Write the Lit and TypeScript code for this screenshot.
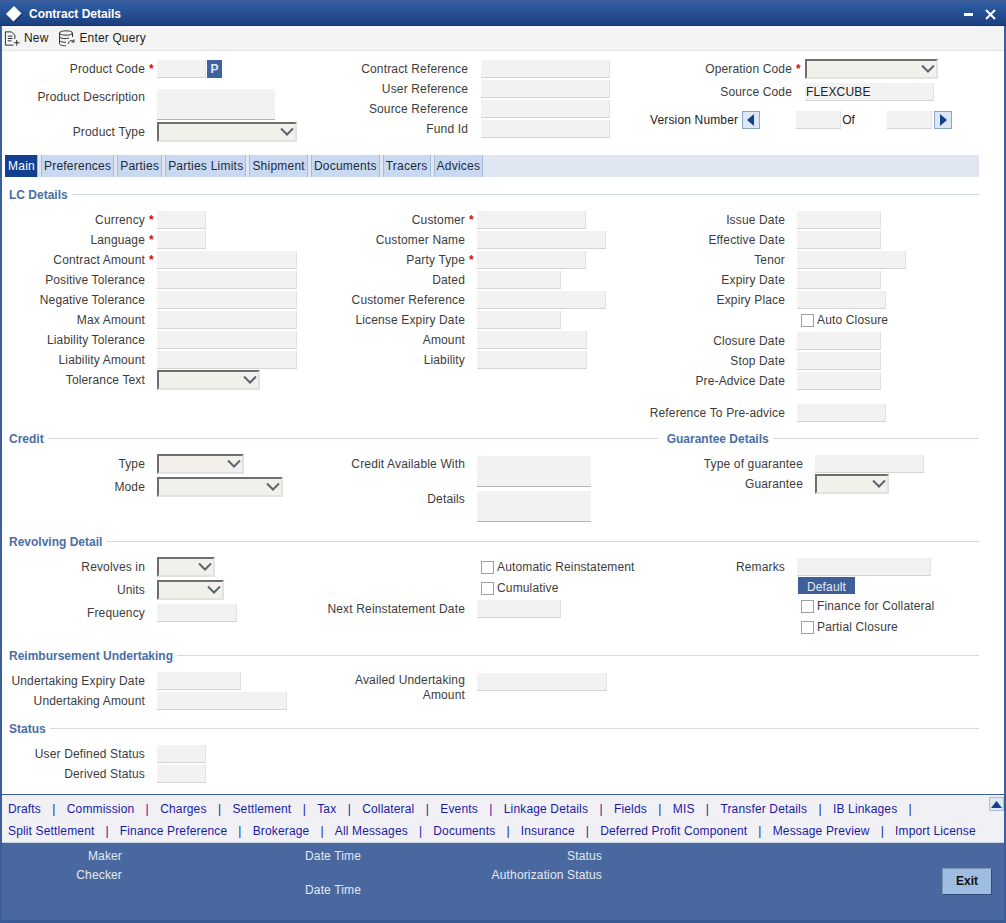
import { LitElement, html, css, svg, nothing } from "lit";
import { customElement } from "lit/decorators.js";

type Kind = "input" | "select" | "area" | "check" | "custom";

interface Row {
	label?: string;
	star?: boolean;
	kind?: Kind;
	w?: number;
	top?: number; // gap above the row
	two?: boolean;
}

const chevron = svg`<svg width="16" height="10" viewBox="0 0 16 10"><path d="M2 1.5 8 7.5 14 1.5" fill="none" stroke="#5b6470" stroke-width="2"/></svg>`;

const LC_1: Row[] = [
	{ label: "Currency", star: true, w: 49 },
	{ label: "Language", star: true, w: 49 },
	{ label: "Contract Amount", star: true, w: 140 },
	{ label: "Positive Tolerance", w: 140 },
	{ label: "Negative Tolerance", w: 140 },
	{ label: "Max Amount", w: 140 },
	{ label: "Liability Tolerance", w: 140 },
	{ label: "Liability Amount", w: 140 },
	{ label: "Tolerance Text", kind: "select", w: 103 },
];

const LC_2: Row[] = [
	{ label: "Customer", star: true, w: 109 },
	{ label: "Customer Name", w: 129 },
	{ label: "Party Type", star: true, w: 109 },
	{ label: "Dated", w: 84 },
	{ label: "Customer Reference", w: 129 },
	{ label: "License Expiry Date", w: 84 },
	{ label: "Amount", w: 110 },
	{ label: "Liability", w: 110 },
];

const LC_3: Row[] = [
	{ label: "Issue Date", w: 84 },
	{ label: "Effective Date", w: 84 },
	{ label: "Tenor", w: 109 },
	{ label: "Expiry Date", w: 84 },
	{ label: "Expiry Place", w: 89 },
	{ label: "Auto Closure", kind: "check" },
	{ label: "Closure Date", w: 84, top: 1 },
	{ label: "Stop Date", w: 84 },
	{ label: "Pre-Advice Date", w: 84 },
	{ label: "Reference To Pre-advice", w: 89, top: 12 },
];

const LINKS_1 = ["Drafts", "Commission", "Charges", "Settlement", "Tax", "Collateral", "Events", "Linkage Details", "Fields", "MIS", "Transfer Details", "IB Linkages"];
const LINKS_2 = ["Split Settlement", "Finance Preference", "Brokerage", "All Messages", "Documents", "Insurance", "Deferred Profit Component", "Message Preview", "Import License"];
const TABS = ["Main", "Preferences", "Parties", "Parties Limits", "Shipment", "Documents", "Tracers", "Advices"];

@customElement("app-root")
export class AppRoot extends LitElement {
	static override styles = css`
		:host {
			display: block;
			width: 1006px;
			height: 923px;
			font: 12px/16px "Liberation Sans", Arial, sans-serif;
			letter-spacing: 0.15px;
			color: #3c3c3c;
		}

		* { box-sizing: border-box; }

		.window {
			display: flex;
			flex-direction: column;
			height: 923px;
			background: #fff;
			border: solid #3d5e9c;
			border-width: 3px 2px;
			border-bottom-color: #3a5a96;
		}

		.title {
			display: flex;
			align-items: center;
			height: 23px;
			margin: 0 -2px;
			padding: 0 10px 0 5px;
			background: linear-gradient(#2f5da3, #1c3f80);
			border-bottom: 1px solid #163468;
			color: #fff;
			font-weight: bold;
			letter-spacing: 0;
		}
		.title span { margin-left: 6px; flex: 1; }
		.title .min { margin-right: 12px; }

		.toolbar {
			display: flex;
			align-items: center;
			height: 25px;
			padding-left: 2px;
			background: #f4f4f4;
			border-bottom: 1px solid #e6e6e6;
			color: #222;
		}
		.toolbar span { margin: 0 10px 0 3px; }

		.head {
			display: grid;
			grid-template-columns: 320px 320px 1fr;
			height: 104px;
			padding-top: 8px;
		}

		.col { display: flex; flex-direction: column; }
		.head .b { --lw: 146px; --sw: 13px; }
		.head .c { --lw: 150px; --sw: 13px; }

		.row {
			--row-h: 20px;
			display: flex;
			align-items: center;
			min-height: var(--row-h);
		}
		.row.top { align-items: flex-start; }
		.label {
			flex: none;
			width: var(--lw, 143px);
			text-align: right;
		}
		.label.two { line-height: 15px; }
		.slot {
			flex: none;
			width: var(--sw, 12px);
			padding-left: 4px;
			color: #d01010;
			font-weight: bold;
		}

		.input {
			height: 18px;
			padding: 0 1px;
			background: #f2f2f2;
			border: 0;
			border-bottom: 1px solid #d4d4d4;
			border-right: 1px solid #e2e2e2;
			font: inherit;
			letter-spacing: inherit;
			color: #222;
			outline: none;
		}

		.area {
			height: 31px;
			background: #f2f2f2;
			border-bottom: 1px solid #b4b4b4;
		}

		.select {
			display: flex;
			align-items: center;
			justify-content: flex-end;
			height: 20px;
			background: #f1f0ea;
			border: 2px solid #e2e2de;
			border-top-color: #6e6e6e;
			border-left-color: #6e6e6e;
		}

		.check {
			display: flex;
			align-items: center;
			gap: 3px;
			margin-left: 4px;
			color: #3c3c3c;
		}
		.check i {
			width: 13px;
			height: 13px;
			background: #fff;
			border: 1px solid #a0a0a0;
		}

		.lookup {
			width: 15px;
			height: 18px;
			margin-left: 1px;
			background: #3f639f;
			color: #dfe7f3;
			font-weight: bold;
			text-align: center;
			line-height: 18px;
		}

		.version {
			display: flex;
			align-items: center;
			height: 20px;
			margin-top: 8px;
			padding-left: 8px;
			color: #222;
		}
		.version .input { width: 45px; }
		.version .spin {
			display: flex;
			align-items: center;
			justify-content: center;
			width: 18px;
			height: 18px;
			background: #dce8f6;
			border: 1px solid #8aa5c8;
		}
		.version .of { margin: 0 31px 0 1px; }
		.version .m1 { margin-left: 4px; }
		.version .m2 { margin-left: 36px; }
		.version .m3 { margin-left: 1px; }
		.version .m4 { margin-left: 2px; }

		.tabs {
			display: flex;
			gap: 3px;
			height: 22px;
			margin: 0 25px 0 3px;
			background: #e0e7f3;
		}
		.tab {
			padding: 3px 2px 0;
			background: #c9d9f2;
			border: 1px solid #a6bbd8;
			border-width: 0 1px;
			color: #1e2a3a;
			letter-spacing: 0.23px;
			white-space: nowrap;
		}
		.tab.active {
			background: #123f8f;
			border-left-color: #6a2a50;
			color: #fff;
		}

		.lc { height: 244px; margin-top: 10px; }
		.credit { height: 103px; }
		.revolving { height: 114px; }
		.reimb { height: 73px; }
		.status { height: 73px; }

		.legend {
			display: flex;
			align-items: center;
			height: 16px;
			margin: 0 25px 7px 7px;
			color: #4a6ea5;
			font-weight: bold;
			letter-spacing: 0;
		}
		.legend hr {
			flex: 1;
			height: 1px;
			margin: 0 0 2px 4px;
			background: #cfdae6;
			border: 0;
		}
		.legend hr.split {
			flex: none;
			width: 610px;
			margin-right: 9px;
		}

		.cols {
			display: grid;
			grid-template-columns: 320px 320px 1fr;
		}
		.guarantee { --lw: 161px; }

		.row.default-row {
			align-items: flex-start;
			min-height: 19px;
		}
		.default {
			width: 57px;
			height: 17px;
			margin-left: 1px;
			background: #3f5f9b;
			color: #e6ebf4;
			text-align: center;
			line-height: 20px;
			overflow: hidden;
		}

		.links {
			display: flex;
			height: 49px;
			padding: 3px 0 0 6px;
			background: #f1f1f5;
			border-top: 1px solid #3d5e9c;
			border-bottom: 1px solid #c8d4e4;
			color: #1a1aa6;
		}
		.links > div { flex: 1; }
		.line {
			display: flex;
			gap: 11.3px;
			height: 22px;
			align-items: center;
			white-space: nowrap;
		}
		.line.tight { gap: 11.05px; }
		.links .up {
			flex: none;
			align-self: flex-start;
			display: flex;
			align-items: center;
			justify-content: center;
			width: 15px;
			height: 14px;
			margin-top: -1px;
			background: #dce8f6;
			border: 1px solid #a8bdd8;
		}

		.footer {
			display: flex;
			flex: 1;
			padding-top: 4px;
			background: #4a68a0;
			color: #e4e9f2;
			line-height: 19px;
		}
		.footer .names { width: 120px; text-align: right; }
		.footer .times { width: 157px; margin-left: 183px; }
		.footer .times div + div { margin-top: 15px; }
		.footer .states { width: 140px; text-align: right; }
		.exit {
			width: 50px;
			height: 27px;
			margin: 21px 12px 0 auto;
			background: #9fbde3;
			border: 1px solid #7f96b8;
			border-right-color: #2f4a78;
			border-bottom-color: #2f4a78;
			color: #111;
			font-weight: bold;
			letter-spacing: 0;
			text-align: center;
			line-height: 25px;
		}
	`;

	private control(r: Row) {
		if (r.kind === "select") {
			return html`<div class="select" style="width:${r.w}px">${chevron}</div>`;
		}
		if (r.kind === "area") {
			return html`<div class="area" style="width:${r.w}px"></div>`;
		}
		return html`<input class="input" readonly style="width:${r.w}px" />`;
	}

	private row(r: Row) {
		const gap = r.top ? `margin-top:${r.top}px` : nothing;
		if (r.kind === "check") {
			return html`
				<div class="row" style="${gap}">
					<div class="label"></div>
					<div class="slot"></div>
					<div class="check"><i></i>${r.label}</div>
				</div>
			`;
		}
		const aligned = r.kind === "area" || r.two;
		return html`
			<div class="row ${aligned ? "top" : ""}" style="${gap}">
				<div class="label ${r.two ? "two" : ""}">${r.label}</div>
				<div class="slot">${r.star ? "*" : ""}</div>
				${this.control(r)}
			</div>
		`;
	}

	private links(items: string[], trailing: boolean) {
		return html`
			<div class="line ${trailing ? "" : "tight"}">
				${items.map((item, i) => html`<span>${item}</span>${i < items.length - 1 || trailing ? html`<span>|</span>` : nothing}`)}
			</div>
		`;
	}

	override render() {
		return html`
			<div class="window">
				<div class="title">
					<svg width="18" height="18" viewBox="0 0 18 18"><path d="M9 1 17 9 9 17 1 9Z" fill="#fff"/><path d="M17 9 9 17" stroke="#10306a" stroke-width="1.500"/></svg>
					<span>Contract Details</span>
					<svg class="min" width="9" height="3" viewBox="0 0 9 3"><rect width="9" height="3" fill="#fff"/></svg>
					<svg width="11" height="11" viewBox="0 0 11 11"><path d="M1 1 10 10M10 1 1 10" stroke="#fff" stroke-width="2"/></svg>
				</div>

				<div class="toolbar">
					<svg width="17" height="17" viewBox="0 0 18 17" fill="none" stroke="#222"><path d="M1.5 15.5V1.5H8L11.5 5V9M1.5 15.5H10M4 6H9M4 8.500H9M4 11H8M13.500 10V16M10.500 13H16.500"/></svg>
					<span>New</span>
					<svg width="18" height="17" viewBox="0 0 18 17" fill="none" stroke="#333"><ellipse cx="8" cy="3" rx="6.500" ry="2.200"/><path d="M1.500 3V13.500C1.500 15 4 15.800 8 15.800M14.500 3V7M1.500 7C3 9 8 9 11 8M1.500 10.500C3 12 5 12.300 8 12.300M10 14C10.500 11 13.500 9.500 16 11.500M16 9.500V12H13.500"/></svg>
					<span>Enter Query</span>
				</div>

				<div class="head">
					<div class="col">
						<div class="row">
							<div class="label">Product Code</div>
							<div class="slot">*</div>
							<input class="input" readonly style="width:49px" />
							<div class="lookup">P</div>
						</div>
						${this.row({ label: "Product Description", kind: "area", w: 118, top: 10 })}
						${this.row({ label: "Product Type", kind: "select", w: 140, top: 2 })}
					</div>
					<div class="col b">
						${this.row({ label: "Contract Reference", w: 129 })}
						${this.row({ label: "User Reference", w: 129 })}
						${this.row({ label: "Source Reference", w: 129 })}
						${this.row({ label: "Fund Id", w: 129 })}
					</div>
					<div class="col c">
						${this.row({ label: "Operation Code", star: true, kind: "select", w: 133 })}
						<div class="row" style="margin-top:3px">
							<div class="label">Source Code</div>
							<div class="slot"></div>
							<input class="input" readonly value="FLEXCUBE" style="width:129px" />
						</div>
						<div class="version">
							Version Number
							<div class="spin m1"><svg width="8" height="12" viewBox="0 0 8 12"><path d="M7 0V12L0 6Z" fill="#15408c"/></svg></div>
							<input class="input m2" readonly />
							<span class="of">Of</span>
							<input class="input m3" readonly />
							<div class="spin m4"><svg width="8" height="12" viewBox="0 0 8 12"><path d="M1 0V12L8 6Z" fill="#15408c"/></svg></div>
						</div>
					</div>
				</div>

				<div class="tabs">
					${TABS.map((t, i) => html`<div class="tab ${i === 0 ? "active" : ""}">${t}</div>`)}
				</div>

				<div class="lc">
					<div class="legend">LC Details<hr /></div>
					<div class="cols">
						<div class="col">${LC_1.map((r) => this.row(r))}</div>
						<div class="col">${LC_2.map((r) => this.row(r))}</div>
						<div class="col">${LC_3.map((r) => this.row(r))}</div>
					</div>
				</div>

				<div class="credit">
					<div class="legend">Credit<hr class="split" />Guarantee Details<hr /></div>
					<div class="cols">
						<div class="col">
							${this.row({ label: "Type", kind: "select", w: 87 })}
							${this.row({ label: "Mode", kind: "select", w: 126, top: 3 })}
						</div>
						<div class="col">
							${this.row({ label: "Credit Available With", kind: "area", w: 114, top: 2 })}
							${this.row({ label: "Details", kind: "area", w: 114, top: 4 })}
						</div>
						<div class="col guarantee">
							${this.row({ label: "Type of guarantee", w: 109 })}
							${this.row({ label: "Guarantee", kind: "select", w: 74 })}
						</div>
					</div>
				</div>

				<div class="revolving">
					<div class="legend">Revolving Detail<hr /></div>
					<div class="cols">
						<div class="col">
							${this.row({ label: "Revolves in", kind: "select", w: 58 })}
							${this.row({ label: "Units", kind: "select", w: 67, top: 3 })}
							${this.row({ label: "Frequency", w: 80, top: 3 })}
						</div>
						<div class="col">
							${this.row({ label: "Automatic Reinstatement", kind: "check" })}
							${this.row({ label: "Cumulative", kind: "check", top: 1 })}
							${this.row({ label: "Next Reinstatement Date", w: 84, top: 1 })}
						</div>
						<div class="col">
							${this.row({ label: "Remarks", w: 134 })}
							<div class="row default-row">
								<div class="label"></div>
								<div class="slot"></div>
								<div class="default">Default</div>
							</div>
							${this.row({ label: "Finance for Collateral", kind: "check" })}
							${this.row({ label: "Partial Closure", kind: "check", top: 1 })}
						</div>
					</div>
				</div>

				<div class="reimb">
					<div class="legend">Reimbursement Undertaking<hr /></div>
					<div class="cols">
						<div class="col">
							${this.row({ label: "Undertaking Expiry Date", w: 84 })}
							${this.row({ label: "Undertaking Amount", w: 130 })}
						</div>
						<div class="col">
							${this.row({ label: "Availed Undertaking Amount", w: 130, two: true, top: 2 })}
						</div>
					</div>
				</div>

				<div class="status">
					<div class="legend">Status<hr /></div>
					<div class="cols">
						<div class="col">
							${this.row({ label: "User Defined Status", w: 49 })}
							${this.row({ label: "Derived Status", w: 49 })}
						</div>
					</div>
				</div>

				<div class="links">
					<div>
						${this.links(LINKS_1, true)}
						${this.links(LINKS_2, false)}
					</div>
					<div class="up"><svg width="11" height="7" viewBox="0 0 11 7"><path d="M0 7 5.500 0 11 7Z" fill="#15408c"/></svg></div>
				</div>

				<div class="footer">
					<div class="names"><div>Maker</div><div>Checker</div></div>
					<div class="times"><div>Date Time</div><div>Date Time</div></div>
					<div class="states"><div>Status</div><div>Authorization Status</div></div>
					<div class="exit">Exit</div>
				</div>
			</div>
		`;
	}
}
